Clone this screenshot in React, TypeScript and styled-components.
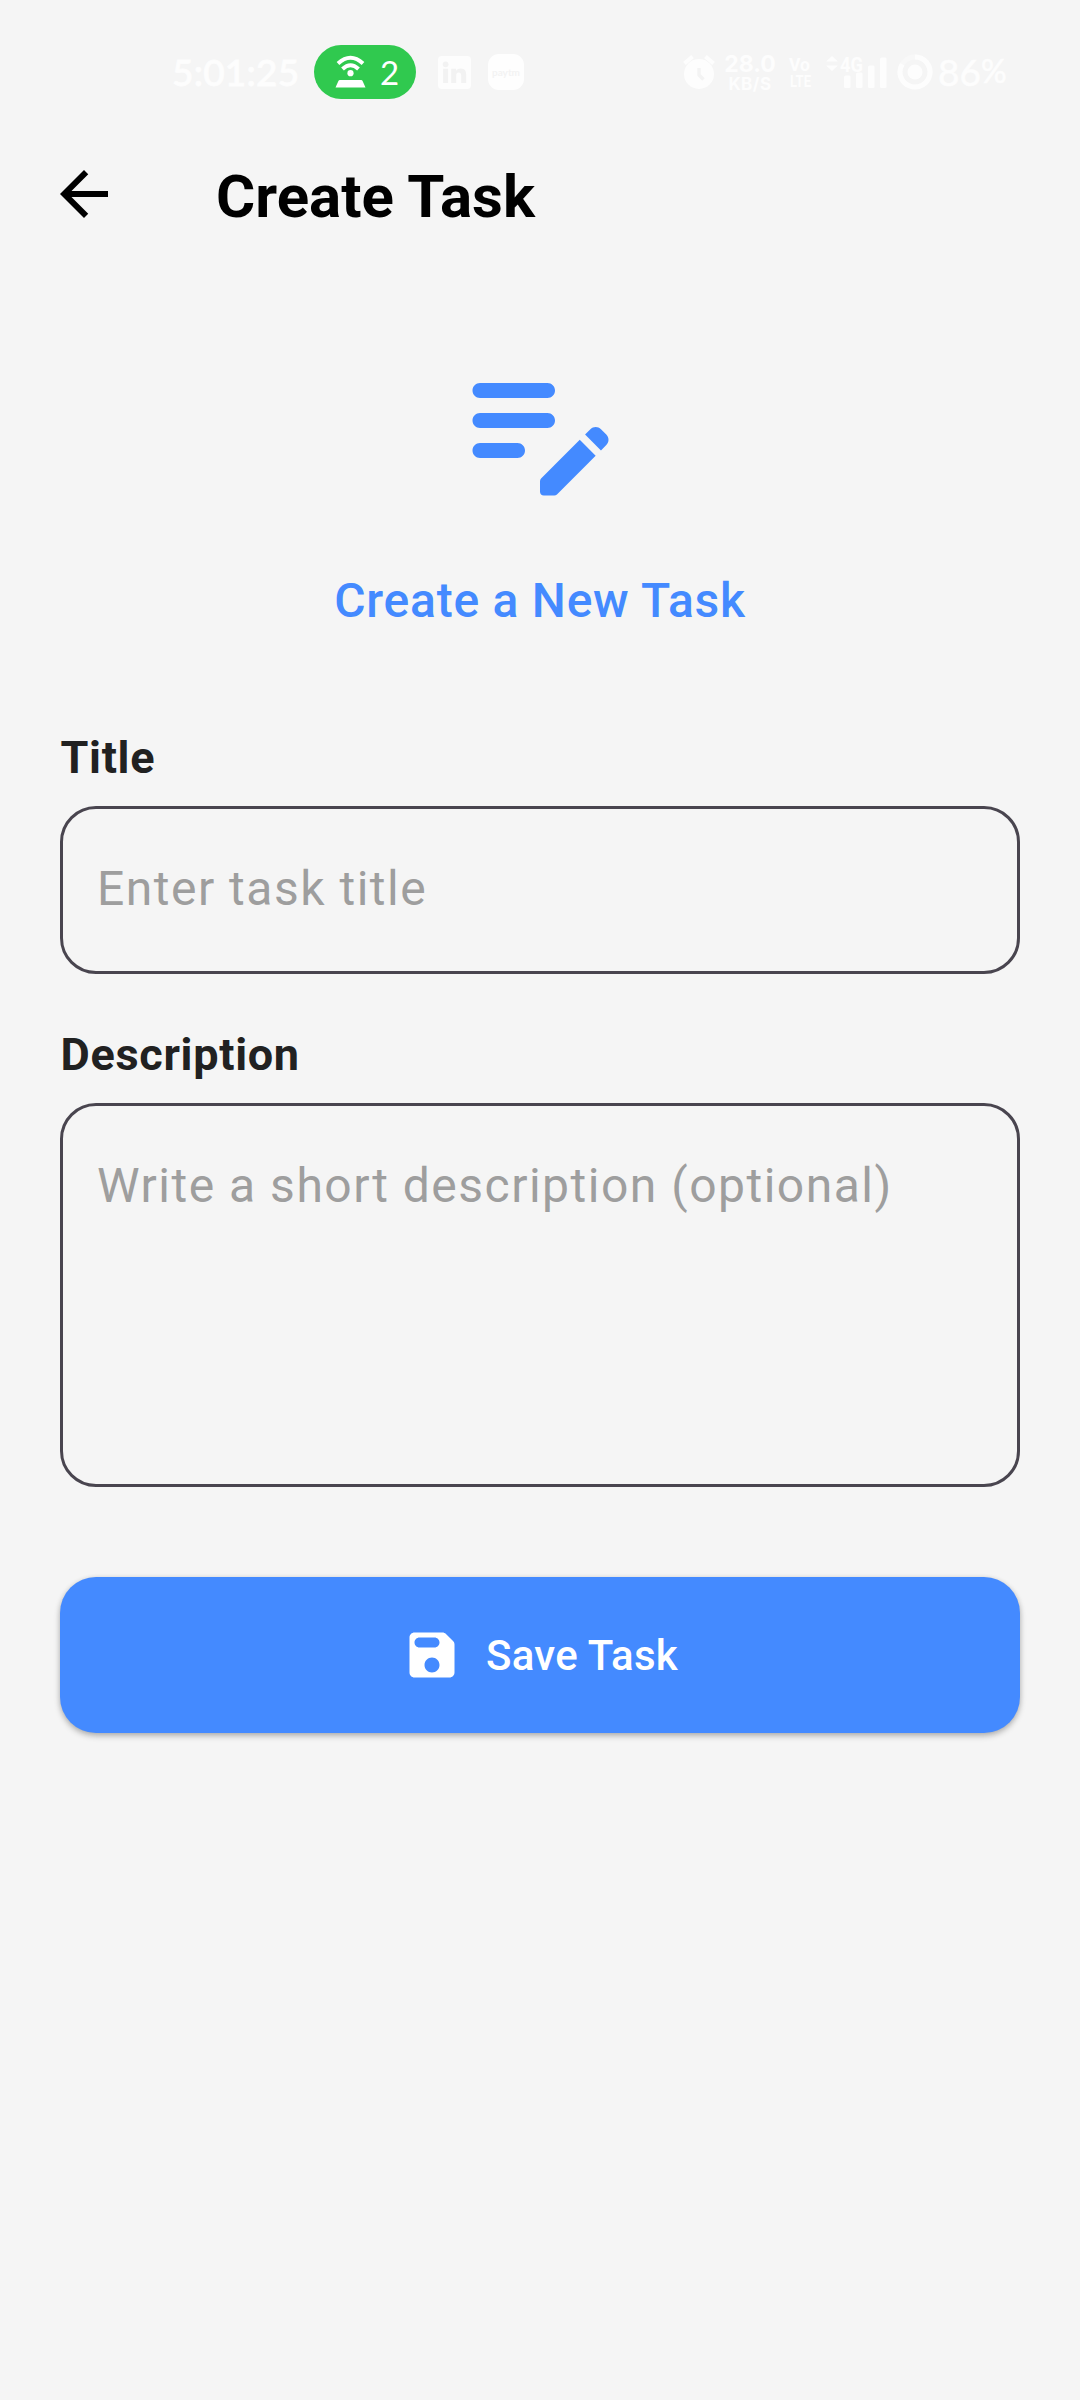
import React from "react";
import styled, { createGlobalStyle } from "styled-components";

const GlobalStyle = createGlobalStyle`
  *, *::before, *::after { box-sizing: border-box; }
  html, body { margin: 0; padding: 0; background: #f5f5f5; }
  body { font-family: Roboto, "Noto Sans", sans-serif; }
`;

const Screen = styled.div`
  width: 1080px;
  height: 2400px;
  background: #f5f5f5;
  display: flex;
  flex-direction: column;
  overflow: hidden;
`;

const StatusBar = styled.div`
  height: 144px;
  flex: none;
  display: flex;
  align-items: center;
  justify-content: space-between;
  padding: 0 74px 0 172px;
  color: #fdfdfd;
  font-family: Lato, "Open Sans", sans-serif;
`;

const StatusGroup = styled.div`
  display: flex;
  align-items: center;
`;

const Clock = styled.span`
  width: 142px;
  font-size: 37px;
  line-height: 44px;
  font-weight: 500;
  white-space: nowrap;
  letter-spacing: 0.2px;
  -webkit-text-stroke: 0.8px #fdfdfd;
`;

const HotspotPill = styled.div`
  width: 102px;
  height: 54px;
  border-radius: 27px;
  background: #30c94f;
  display: flex;
  align-items: center;
  padding-left: 21px;
  gap: 13px;
  font-size: 33px;
  line-height: 40px;
  color: #fff;
  svg { display: block; }
`;

const LinkedIn = styled.div`
  width: 33px;
  height: 33px;
  margin: 0 17px 0 22px;
  border-radius: 4px;
  background: #fdfdfd;
  svg { display: block; }
`;

const Paytm = styled.div`
  width: 36px;
  height: 36px;
  border-radius: 11px;
  background: #fefefe;
  color: #f3f3f3;
  display: flex;
  align-items: center;
  justify-content: center;
  font: 700 10px/12px Lato, sans-serif;
`;

const SpeedStack = styled.div`
  width: 52px;
  margin-left: 9px;
  padding-top: 3px;
  display: flex;
  flex-direction: column;
  align-items: center;
  white-space: nowrap;
  font-family: Inter, Roboto, sans-serif;
  font-weight: 700;
`;

const SpeedValue = styled.span`
  font-size: 23px;
  line-height: 21px;
`;

const SpeedUnit = styled.span`
  font-size: 17px;
  line-height: 19px;
  letter-spacing: 0.5px;
`;

const VolteMark = styled.svg`
  display: block;
  margin-left: 11px;
`;

const Signal = styled.svg`
  display: block;
  margin-left: 12px;
`;

const Ring = styled.svg`
  display: block;
  margin-left: 10px;
`;

const Battery = styled.span`
  width: 73px;
  padding-left: 5px;
  display: flex;
  align-items: flex-start;
  font-size: 37px;
  line-height: 44px;
  white-space: nowrap;
  -webkit-text-stroke: 0.6px #fdfdfd;
`;

const Percent = styled.span`
  font-size: 32px;
  line-height: 41px;
  letter-spacing: -1px;
`;

const AppBar = styled.header`
  height: 100px;
  flex: none;
  display: flex;
  align-items: center;
  padding-left: 48px;
  gap: 96px;
`;

const BackButton = styled.button`
  width: 72px;
  height: 72px;
  padding: 0;
  border: 0;
  background: none;
  color: #000;
  svg { display: block; }
`;

const AppTitle = styled.h1`
  margin: 0;
  padding-top: 5px;
  font-size: 60px;
  line-height: 72px;
  font-weight: 700;
  color: #000;
`;

const Form = styled.main`
  display: flex;
  flex-direction: column;
  padding: 94px 60px 0;
`;

const Hero = styled.div`
  display: flex;
  flex-direction: column;
  align-items: center;
  color: #448aff;
  svg { display: block; }
`;

const HeroTitle = styled.h2`
  margin: 47px 0 0;
  font-size: 48px;
  line-height: 72px;
  font-weight: 500;
  letter-spacing: 0.75px;
`;

const Field = styled.label<{ $top: number }>`
  display: flex;
  flex-direction: column;
  margin-top: ${(p) => p.$top}px;
`;

const FieldLabel = styled.span`
  padding: 1px 0 0 0.5px;
  font-size: 45px;
  line-height: 64px;
  font-weight: 700;
  letter-spacing: 0.7px;
  color: #212121;
  margin-bottom: 16px;
`;

const TextBox = styled.textarea<{ $height: number }>`
  display: block;
  width: 100%;
  height: ${(p) => p.$height}px;
  padding: 44px 33px 40px 34px;
  border: 3px solid #49454f;
  border-radius: 36px;
  background: transparent;
  outline: none;
  resize: none;
  overflow: hidden;
  font-family: Roboto, "Noto Sans", sans-serif;
  font-size: 48px;
  line-height: 72px;
  letter-spacing: 1.5px;
  color: #212121;
  &::placeholder { color: #9e9e9e; opacity: 1; }
`;

const SaveButton = styled.button`
  margin-top: 90px;
  height: 156px;
  border: 0;
  border-radius: 36px;
  background: #448aff;
  color: #fff;
  display: flex;
  align-items: center;
  justify-content: center;
  gap: 24px;
  font-family: Roboto, "Noto Sans", sans-serif;
  font-size: 42px;
  line-height: 60px;
  font-weight: 500;
  letter-spacing: 0.3px;
  box-shadow: 0 3px 6px rgba(0, 0, 0, 0.24), 0 1px 5px rgba(0, 0, 0, 0.1);
  svg { display: block; }
`;

const SaveLabel = styled.span`
  padding-top: 2px;
`;

function HotspotIcon() {
  return (
    <svg width="32" height="34" viewBox="0 0 32 34" fill="none">
      <path d="M3 8.5Q15.5-3 28 8.5" stroke="#fff" strokeWidth="4" />
      <path d="M7.5 14Q15.5 6.5 23.5 14" stroke="#fff" strokeWidth="4" />
      <circle cx="15.5" cy="18.2" r="3.1" fill="#fff" />
      <path d="M5 25h21q1.3 0 1.7 1.2L30.5 32.6H.5L3.3 26.2Q3.7 25 5 25z" fill="#fff" />
    </svg>
  );
}

function AlarmIcon() {
  return (
    <svg width="32" height="36" viewBox="0 0 32 36" fill="none">
      <circle cx="16" cy="20" r="15" fill="#fdfdfd" />
      <path d="M1.5 9.5 9.5 2.5M30.5 9.5 22.5 2.5" stroke="#fdfdfd" strokeWidth="4" />
      <path d="M16 14v7l4.5 4.5" stroke="#f3f3f3" strokeWidth="3.4" />
    </svg>
  );
}

function VolteIcon() {
  return (
    <VolteMark width="26" height="40" viewBox="0 0 26 40" fill="#fdfdfd" fontFamily="Roboto, sans-serif" fontWeight="700">
      <text x="2" y="18.500" fontSize="18" textLength="21" lengthAdjust="spacingAndGlyphs">
        Vo
      </text>
      <text x="3" y="35" fontSize="17" textLength="21" lengthAdjust="spacingAndGlyphs">
        LTE
      </text>
    </VolteMark>
  );
}

function SignalIcon() {
  return (
    <Signal width="62" height="36" viewBox="0 0 62 36" fill="#fdfdfd">
      <path d="M1 7.5 7 2l6 5.5zM1 11.500h12L7 17z" />
      <text x="15" y="17.5" fontSize="21" fontWeight="700" fontFamily="Roboto, sans-serif" textLength="23" lengthAdjust="spacingAndGlyphs">
        4G
      </text>
      <rect x="19" y="21.5" width="6.5" height="12.5" rx="1.5" />
      <rect x="31" y="18.5" width="6.5" height="15.5" rx="1.5" />
      <rect x="43" y="11.5" width="6.5" height="22.5" rx="1.5" />
      <rect x="55" y="3.5" width="6.5" height="30.5" rx="1.5" />
    </Signal>
  );
}

function BatteryRing() {
  return (
    <Ring width="36" height="36" viewBox="0 0 36 36" fill="none">
      <circle cx="18" cy="18" r="15" stroke="#f8f8f8" strokeWidth="5" />
      <path d="M18 3A15 15 0 1 1 5.2 10.2" stroke="#fdfdfd" strokeWidth="5" />
      <circle cx="18" cy="18" r="7.5" fill="#fdfdfd" />
    </Ring>
  );
}

export default function App() {
  return (
    <>
      <GlobalStyle />
      <Screen>
        <StatusBar>
          <StatusGroup>
            <Clock>5:01:25</Clock>
            <HotspotPill>
              <HotspotIcon />
              <span>2</span>
            </HotspotPill>
            <LinkedIn>
              <svg width="33" height="33" viewBox="0 0 33 33" fill="#f2f2f2">
                <circle cx="7.6" cy="8.3" r="2.9" />
                <path d="M5.1 12.8h5V27h-5zM13.2 12.8H18v2c1-1.500 2.700-2.300 4.800-2.300 4.300 0 5.400 2.800 5.400 6.600V27h-5v-7c0-1.800-.3-3.400-2.400-3.400s-2.600 1.600-2.600 3.400v7h-5z" />
              </svg>
            </LinkedIn>
            <Paytm>paytm</Paytm>
          </StatusGroup>
          <StatusGroup>
            <AlarmIcon />
            <SpeedStack>
              <SpeedValue>28.0</SpeedValue>
              <SpeedUnit>KB/S</SpeedUnit>
            </SpeedStack>
            <VolteIcon />
            <SignalIcon />
            <BatteryRing />
            <Battery>
              86<Percent>%</Percent>
            </Battery>
          </StatusGroup>
        </StatusBar>

        <AppBar>
          <BackButton aria-label="Back">
            <svg width="72" height="72" viewBox="0 0 24 24" fill="currentColor">
              <path d="M20 11H7.830l5.590-5.590L12 4l-8 8 8 8 1.410-1.410L7.830 13H20v-2z" />
            </svg>
          </BackButton>
          <AppTitle>Create Task</AppTitle>
        </AppBar>

        <Form>
          <Hero>
            <svg width="180" height="180" viewBox="0 0 24 24" fill="currentColor">
              <path d="M14 11c0 .55-.45 1-1 1H4c-.55 0-1-.45-1-1s.45-1 1-1h9c.55 0 1 .45 1 1M3 7c0 .55.45 1 1 1h9c.55 0 1-.45 1-1s-.45-1-1-1H4c-.55 0-1 .45-1 1m7 8c0-.55-.45-1-1-1H4c-.55 0-1 .45-1 1s.45 1 1 1h5c.55 0 1-.45 1-1m8.010-2.130.71-.71c.39-.39 1.020-.39 1.410 0l.71.71c.39.39.39 1.020 0 1.410l-.71.71zm-.71.71-5.160 5.160c-.09.09-.14.21-.14.35v1.410c0 .28.22.5.5.5h1.410c.13 0 .26-.05.35-.15l5.160-5.160z" />
            </svg>
            <HeroTitle>Create a New Task</HeroTitle>
          </Hero>

          <Field $top={88}>
            <FieldLabel>Title</FieldLabel>
            <TextBox $height={168} rows={1} placeholder="Enter task title" />
          </Field>
          <Field $top={48}>
            <FieldLabel>Description</FieldLabel>
            <TextBox $height={384} rows={4} placeholder="Write a short description (optional)" />
          </Field>

          <SaveButton>
            <svg width="60" height="60" viewBox="0 0 24 24" fill="currentColor">
              <path d="M17.590 3.590c-.38-.38-.89-.59-1.420-.59H5c-1.110 0-2 .9-2 2v14c0 1.100.9 2 2 2h14c1.100 0 2-.9 2-2V7.830c0-.53-.21-1.040-.59-1.410l-2.820-2.830zM12 19c-1.660 0-3-1.340-3-3s1.340-3 3-3 3 1.340 3 3-1.340 3-3 3zm1-10H7c-1.100 0-2-.9-2-2s.9-2 2-2h6c1.100 0 2 .9 2 2s-.9 2-2 2z" />
            </svg>
            <SaveLabel>Save Task</SaveLabel>
          </SaveButton>
        </Form>
      </Screen>
    </>
  );
}
